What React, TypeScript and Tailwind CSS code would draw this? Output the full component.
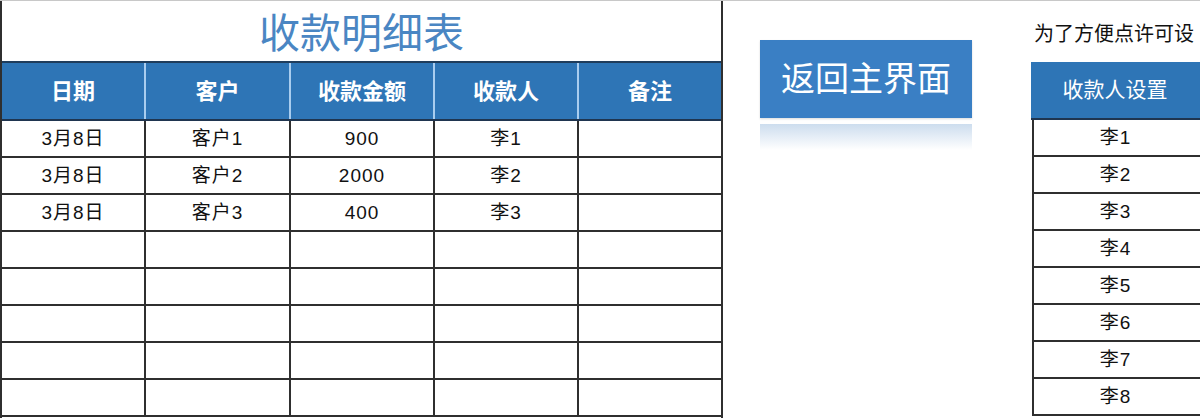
const font = { fontFamily: '"Liberation Sans", "Noto Sans CJK SC", sans-serif' }

const headers = ['日期', '客户', '收款金额', '收款人', '备注']
const widths = ['w-[144px]', 'w-[145px]', 'w-[144px]', 'w-[144px]', 'w-[142px]']

const rows: string[][] = [
  ['3月8日', '客户1', '900', '李1', ''],
  ['3月8日', '客户2', '2000', '李2', ''],
  ['3月8日', '客户3', '400', '李3', ''],
  ['', '', '', '', ''],
  ['', '', '', '', ''],
  ['', '', '', '', ''],
  ['', '', '', '', ''],
  ['', '', '', '', ''],
]

const payees = ['李1', '李2', '李3', '李4', '李5', '李6', '李7', '李8']

export default function App() {
  return (
    <div
      className="w-[1200px] h-[418px] overflow-hidden bg-white flex border-t border-[#c8c8c8] text-[#111]"
      style={font}
    >
      {/* Main sheet */}
      <div className="w-[723px] flex-shrink-0 border-l-2 border-r-2 border-[#2f2f2f] flex flex-col">
        <div className="h-[62px] border-b-2 border-[#1f3d5c] flex items-center justify-center">
          <span className="text-[41px] text-[#4a86c3] leading-none pt-[6px]">收款明细表</span>
        </div>
        <div className="h-[58px] flex bg-[#2e75b6] border-b-2 border-[#1f3550]">
          {headers.map((h, i) => (
            <div
              key={h}
              className={`${widths[i]} flex items-center justify-center text-white text-[22px] font-bold ${
                i < 4 ? 'border-r-2 border-[#a9cdef]' : ''
              }`}
            >
              {h}
            </div>
          ))}
        </div>
        {rows.map((r, ri) => (
          <div key={ri} className="h-[37px] flex border-b-2 border-[#2f2f2f] flex-shrink-0">
            {r.map((c, i) => (
              <div
                key={i}
                className={`${widths[i]} flex items-center justify-center text-[19px] tracking-[1px] pt-[2px] ${
                  i < 4 ? 'border-r-2 border-[#2f2f2f]' : ''
                }`}
              >
                {c}
              </div>
            ))}
          </div>
        ))}
      </div>

      {/* Back button */}
      <div className="ml-[37px] pt-[39px] flex flex-col w-[212px] flex-shrink-0">
        <button className="h-[78px] w-[212px] bg-[#3a7fc4] text-white text-[34px] flex items-center justify-center shadow-[0_1px_2px_rgba(0,0,0,0.15)]">
          返回主界面
        </button>
        <div className="mt-[6px] h-[26px] w-[212px] bg-gradient-to-b from-[#c7d9ec] to-white opacity-90" />
      </div>

      {/* Payee settings */}
      <div className="ml-[59px] flex flex-col w-[180px] flex-shrink-0">
        <div className="h-[61px] flex items-center pl-[3px] pt-[4px] text-[20px] whitespace-nowrap text-[#111]">
          为了方便点许可设
        </div>
        <div className="h-[58px] bg-[#2e75b6] flex items-center justify-center text-white text-[21px] pr-[12px] border-b-2 border-[#1f3550]">
          收款人设置
        </div>
        {payees.map(p => (
          <div
            key={p}
            className="h-[37px] ml-[1px] border-l-2 border-b-2 border-r-2 border-[#2f2f2f] flex items-center justify-center text-[19px] tracking-[1px] pt-[2px] pr-[12px] flex-shrink-0"
          >
            {p}
          </div>
        ))}
      </div>
    </div>
  )
}
